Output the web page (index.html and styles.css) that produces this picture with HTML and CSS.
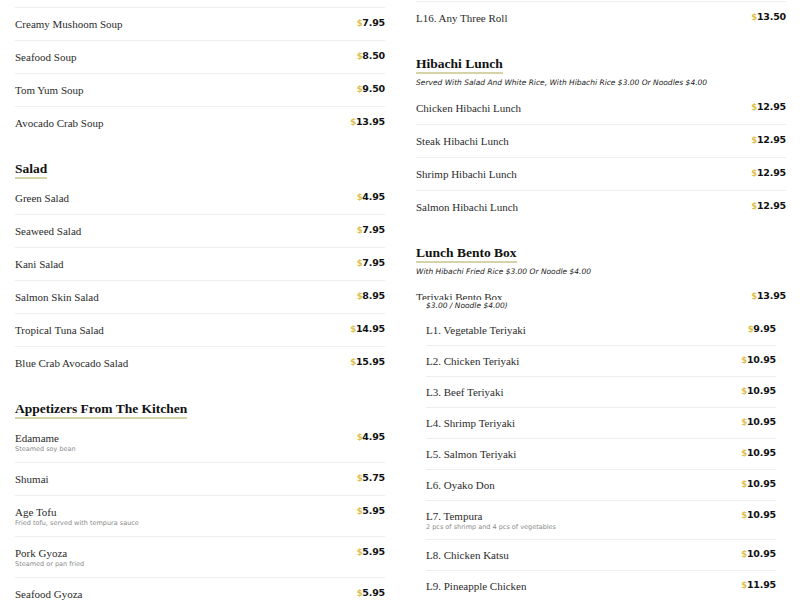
FILE: index.html
```html
<!DOCTYPE html>
<html>
<head>
<meta charset="utf-8">
<link rel="stylesheet" href="styles.css">
</head>
<body>
<div class="page">
  <div class="col col-left">
    <section class="section">
      <ul class="list cont">
        <li class="item"><div class="info"><div class="name">Creamy Mushoom Soup</div></div><div class="price"><span class="cur">$</span>7.95</div></li>
        <li class="item"><div class="info"><div class="name">Seafood Soup</div></div><div class="price"><span class="cur">$</span>8.50</div></li>
        <li class="item"><div class="info"><div class="name">Tom Yum Soup</div></div><div class="price"><span class="cur">$</span>9.50</div></li>
        <li class="item"><div class="info"><div class="name">Avocado Crab Soup</div></div><div class="price"><span class="cur">$</span>13.95</div></li>
      </ul>
    </section>
    <section class="section">
      <h2 class="heading">Salad</h2>
      <ul class="list">
        <li class="item"><div class="info"><div class="name">Green Salad</div></div><div class="price"><span class="cur">$</span>4.95</div></li>
        <li class="item"><div class="info"><div class="name">Seaweed Salad</div></div><div class="price"><span class="cur">$</span>7.95</div></li>
        <li class="item"><div class="info"><div class="name">Kani Salad</div></div><div class="price"><span class="cur">$</span>7.95</div></li>
        <li class="item"><div class="info"><div class="name">Salmon Skin Salad</div></div><div class="price"><span class="cur">$</span>8.95</div></li>
        <li class="item"><div class="info"><div class="name">Tropical Tuna Salad</div></div><div class="price"><span class="cur">$</span>14.95</div></li>
        <li class="item"><div class="info"><div class="name">Blue Crab Avocado Salad</div></div><div class="price"><span class="cur">$</span>15.95</div></li>
      </ul>
    </section>
    <section class="section">
      <h2 class="heading">Appetizers From The Kitchen</h2>
      <ul class="list">
        <li class="item"><div class="info"><div class="name">Edamame</div><div class="desc">Steamed soy bean</div></div><div class="price"><span class="cur">$</span>4.95</div></li>
        <li class="item"><div class="info"><div class="name">Shumai</div></div><div class="price"><span class="cur">$</span>5.75</div></li>
        <li class="item"><div class="info"><div class="name">Age Tofu</div><div class="desc">Fried tofu, served with tempura sauce</div></div><div class="price"><span class="cur">$</span>5.95</div></li>
        <li class="item"><div class="info"><div class="name">Pork Gyoza</div><div class="desc">Steamed or pan fried</div></div><div class="price"><span class="cur">$</span>5.95</div></li>
        <li class="item"><div class="info"><div class="name">Seafood Gyoza</div></div><div class="price"><span class="cur">$</span>5.95</div></li>
      </ul>
    </section>
  </div>

  <div class="col col-right">
    <section class="section">
      <ul class="list cont">
        <li class="item"><div class="info"><div class="name">L16. Any Three Roll</div></div><div class="price"><span class="cur">$</span>13.50</div></li>
      </ul>
    </section>
    <section class="section">
      <h2 class="heading">Hibachi Lunch</h2>
      <p class="sub">Served With Salad And White Rice, With Hibachi Rice $3.00 Or Noodles $4.00</p>
      <ul class="list">
        <li class="item"><div class="info"><div class="name">Chicken Hibachi Lunch</div></div><div class="price"><span class="cur">$</span>12.95</div></li>
        <li class="item"><div class="info"><div class="name">Steak Hibachi Lunch</div></div><div class="price"><span class="cur">$</span>12.95</div></li>
        <li class="item"><div class="info"><div class="name">Shrimp Hibachi Lunch</div></div><div class="price"><span class="cur">$</span>12.95</div></li>
        <li class="item"><div class="info"><div class="name">Salmon Hibachi Lunch</div></div><div class="price"><span class="cur">$</span>12.95</div></li>
      </ul>
    </section>
    <section class="section">
      <h2 class="heading">Lunch Bento Box</h2>
      <p class="sub">With Hibachi Fried Rice $3.00 Or Noodle $4.00</p>
      <ul class="list">
        <li class="item"><div class="info"><div class="name">Teriyaki Bento Box</div></div><div class="price"><span class="cur">$</span>13.95</div></li>
        <li class="item"><div class="info"><div class="name">Sushi Bento Box</div></div><div class="price"><span class="cur">$</span>14.95</div></li>
      </ul>
    </section>

    <div class="overlay">
      <p class="sub sub-over">$3.00 / Noodle $4.00)</p>
      <ul class="list list-over">
        <li class="item"><div class="info"><div class="name">L1. Vegetable Teriyaki</div></div><div class="price"><span class="cur">$</span>9.95</div></li>
        <li class="item"><div class="info"><div class="name">L2. Chicken Teriyaki</div></div><div class="price"><span class="cur">$</span>10.95</div></li>
        <li class="item"><div class="info"><div class="name">L3. Beef Teriyaki</div></div><div class="price"><span class="cur">$</span>10.95</div></li>
        <li class="item"><div class="info"><div class="name">L4. Shrimp Teriyaki</div></div><div class="price"><span class="cur">$</span>10.95</div></li>
        <li class="item"><div class="info"><div class="name">L5. Salmon Teriyaki</div></div><div class="price"><span class="cur">$</span>10.95</div></li>
        <li class="item"><div class="info"><div class="name">L6. Oyako Don</div></div><div class="price"><span class="cur">$</span>10.95</div></li>
        <li class="item"><div class="info"><div class="name">L7. Tempura</div><div class="desc">2 pcs of shrimp and 4 pcs of vegetables</div></div><div class="price"><span class="cur">$</span>10.95</div></li>
        <li class="item"><div class="info"><div class="name">L8. Chicken Katsu</div></div><div class="price"><span class="cur">$</span>10.95</div></li>
        <li class="item"><div class="info"><div class="name">L9. Pineapple Chicken</div></div><div class="price"><span class="cur">$</span>11.95</div></li>
      </ul>
    </div>
  </div>
</div>
</body>
</html>
```
FILE: styles.css
```css
html, body {
  margin: 0;
  padding: 0;
  background: #fff;
  height: 600px;
  overflow: hidden;
}

.page {
  display: grid;
  grid-template-columns: 370px 370px;
  column-gap: 31px;
  padding: 0 15px;
}

.col {
  position: relative;
}

.col-left {
  padding-top: 7px;
}

.col-right {
  padding-top: 1px;
}

.section {
  margin: 0;
}

.list {
  list-style: none;
  margin: 0;
  padding: 0;
}

.list.cont {
  border-top: 1px solid #eeeeee;
}

.item {
  display: flex;
  justify-content: space-between;
  align-items: flex-start;
  padding: 9px 0 9px;
  border-bottom: 1px solid #eeeeee;
}

.item:last-child {
  border-bottom: none;
}

.name {
  font-family: "Liberation Serif", serif;
  font-size: 11px;
  line-height: 14px;
  color: #2b2b2b;
}

.desc {
  font-family: "DejaVu Sans", sans-serif;
  font-size: 6.5px;
  line-height: 8px;
  color: #8a8a8a;
}

.price {
  font-family: "DejaVu Sans", sans-serif;
  font-weight: bold;
  font-size: 9.5px;
  line-height: 12px;
  letter-spacing: -0.2px;
  color: #111;
}

.cur {
  color: #dcc14e;
  font-size: 8.5px;
}

.heading {
  width: fit-content;
  margin: 22px 0 3px;
  font-family: "Liberation Serif", serif;
  font-weight: bold;
  font-size: 13.5px;
  line-height: 16px;
  color: #111;
  border-bottom: 2px solid #d6d3a6;
}

.sub {
  margin: 4px 0 4px;
  font-family: "DejaVu Sans", sans-serif;
  font-style: italic;
  font-size: 7.5px;
  line-height: 10px;
  color: #222;
}

.overlay {
  position: absolute;
  top: 300px;
  left: 0;
  right: 0;
  height: 320px;
  background: #fff;
  padding: 1px 10px 0;
}

.sub-over {
  margin: 0 0 4px;
}

.list-over .item {
  padding: 8px 0 8px;
}
```
